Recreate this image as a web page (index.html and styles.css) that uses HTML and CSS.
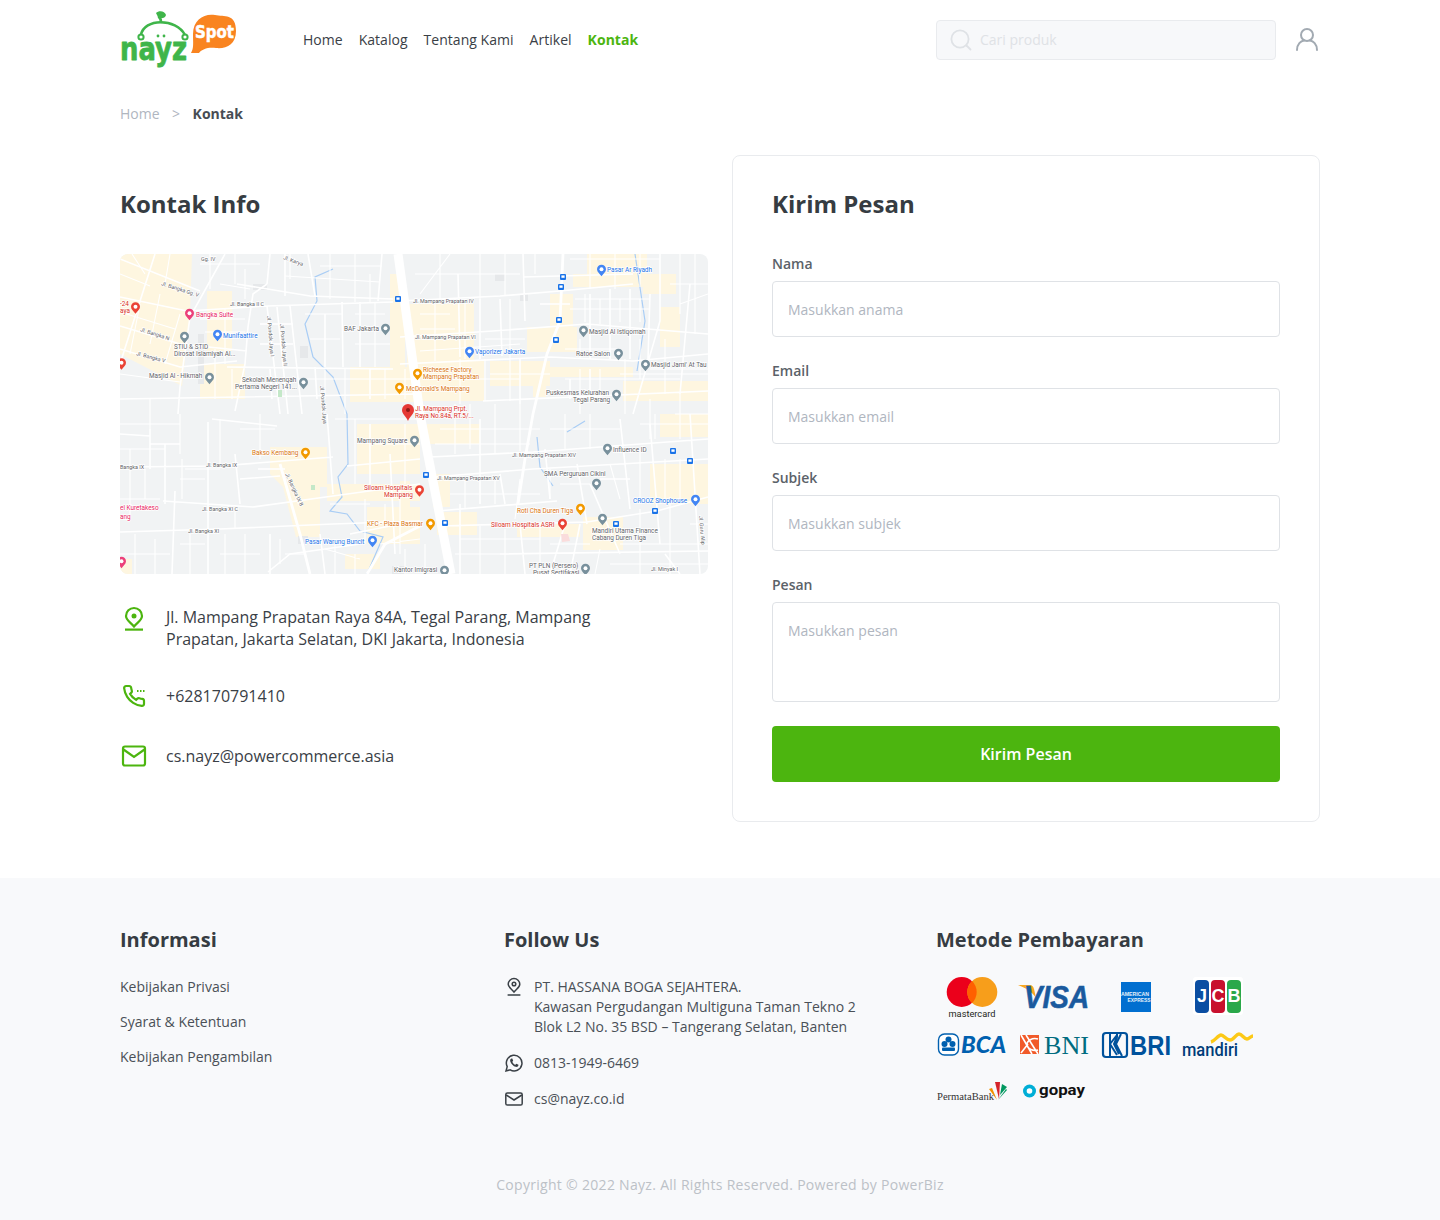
FILE: index.html
```html
<!DOCTYPE html>
<html lang="id">
<head>
<meta charset="utf-8">
<title>Kontak - Nayz</title>
<link rel="stylesheet" href="styles.css">
</head>
<body>
<header class="header wrap">
  <a class="logo" href="#" aria-label="Nayz Spot">
    <svg width="120" height="60" viewBox="0 0 120 60">
      <path class="logo-line" d="M21 25 C24 8 56 8 65 25"/>
      <circle class="logo-ring" cx="21" cy="27" r="2.6"/>
      <circle class="logo-ring" cx="65" cy="27" r="2.6"/>
      <path class="logo-line" d="M41 12 C41 9 40 8 39 7"/>
      <path class="logo-leaf" d="M36 3 C39 0 45 1 46 5 C45 9 40 9 38 7 Z"/>
      <circle class="logo-dot" cx="38" cy="26" r="1.4"/>
      <circle class="logo-dot" cx="44" cy="26" r="1.4"/>
      <text class="logo-nayz" x="0" y="50" textLength="67" lengthAdjust="spacingAndGlyphs">nayz</text>
      <path class="logo-bubble" d="M71 43 C74 38 73 33 73 24 C73 9 85 3 95 5 C104 7 116 3 116 21 C116 35 106 39 96 38 C88 37 82 39 79 43 Z"/>
      <text class="logo-spot" x="75" y="28" textLength="39" lengthAdjust="spacingAndGlyphs">Spot</text>
    </svg>
  </a>
  <nav class="nav">
    <a href="#">Home</a><a href="#">Katalog</a><a href="#">Tentang Kami</a><a href="#">Artikel</a><a class="active" href="#">Kontak</a>
  </nav>
  <div class="header-right">
    <label class="search">
      <svg width="22" height="22" viewBox="0 0 22 22"><circle cx="10" cy="10" r="8.6"/><path d="M16.5 16.5 L20.5 20.5"/></svg>
      <input type="text" placeholder="Cari produk">
    </label>
    <svg class="user" width="24" height="24" viewBox="0 0 24 24"><circle cx="12" cy="8" r="6"/><path d="M2 23 C2 17 6 14 9 13.4 M22 23 C22 17 18 14 15 13.4"/></svg>
  </div>
</header>

<div class="crumbs wrap"><a href="#">Home</a><span class="sep">&gt;</span><strong>Kontak</strong></div>

<main class="main wrap">
  <section class="info">
    <h1 class="title">Kontak Info</h1>
    <svg class="map" viewBox="0 0 588 320" width="588" height="320">
      <defs>
        <symbol id="pin" viewBox="0 0 10 13"><path d="M5 0 A5 5 0 0 1 10 5 C10 8 7 10 5 13 C3 10 0 8 0 5 A5 5 0 0 1 5 0 Z"/><circle cx="5" cy="5" r="2.2" fill="#fff"/></symbol>
        <symbol id="bus" viewBox="0 0 6 6"><rect width="6" height="6" rx="1" fill="#1a73e8"/><rect x="1.4" y="1.4" width="3.2" height="2.4" fill="#fff"/></symbol>
      </defs>
      <rect class="m-bg" width="588" height="320"/>
      <g class="m-yellow">
        <path d="M0 0H72L70 60 62 132 0 100Z"/>
        <rect x="87" y="37" width="25" height="60"/><rect x="80" y="110" width="45" height="35"/>
        <rect x="230" y="113" width="70" height="35"/><rect x="270" y="20" width="15" height="95"/>
        <rect x="287" y="50" width="67" height="57"/><rect x="430" y="40" width="23" height="37"/>
        <rect x="407" y="73" width="50" height="25"/><rect x="370" y="107" width="60" height="25"/>
        <rect x="287" y="107" width="77" height="40"/><rect x="430" y="113" width="83" height="10"/>
        <rect x="453" y="20" width="75" height="13"/><rect x="467" y="0" width="60" height="20"/>
        <rect x="523" y="20" width="33" height="20"/><rect x="540" y="53" width="20" height="40"/>
        <rect x="503" y="127" width="85" height="20"/><rect x="413" y="120" width="13" height="23"/>
        <path d="M150 193H207V233H200V283H176L163 233 150 220Z"/>
        <rect x="207" y="230" width="93" height="17"/><rect x="237" y="170" width="63" height="50"/>
        <rect x="247" y="253" width="53" height="37"/><rect x="280" y="227" width="10" height="33"/>
        <rect x="313" y="220" width="17" height="33"/><rect x="317" y="258" width="40" height="23"/>
        <rect x="397" y="270" width="63" height="13"/><rect x="463" y="263" width="40" height="33"/>
        <rect x="530" y="210" width="58" height="40"/><rect x="540" y="160" width="48" height="23"/>
        <rect x="307" y="170" width="53" height="20"/><rect x="0" y="305" width="12" height="15"/>
        <rect x="225" y="300" width="35" height="15"/>
      </g>
      <g class="m-gray-block"><rect x="180" y="92" width="8" height="12"/><rect x="78" y="80" width="6" height="50"/><rect x="133" y="30" width="14" height="6"/><rect x="178" y="282" width="10" height="8"/><rect x="400" y="40" width="8" height="7"/><rect x="375" y="20" width="10" height="7"/><rect x="272" y="312" width="14" height="8"/></g>
      <path class="m-river" d="M213 15L195 23 197 47 185 70 193 103 213 123 227 160 228 210 218 223 222 243 210 257 227 260 240 277 263 283 247 320M515 0L525 67 517 117M417 183L420 213 433 232M447 178L465 167"/>
      <path class="m-road-thin" d="M12 0L25 20M50 0L45 30M0 20L30 32M0 58L55 75M20 50L10 100M40 40L30 90M60 60L45 110M0 120L60 128M80 10H140M90 0V35M115 0V30M125 15V45M100 30L130 35M80 65H125M85 78H125M105 55V110M95 95V145M112 115V145M170 0V25M200 12H262M210 0V45M235 0V48M250 20V48M165 22L260 28M185 60H222M235 60H265M235 75H270M235 90H270M255 48V113M190 85H220M140 125H300M205 115V145M225 115V160M265 115V145M285 115V145M30 145V175M0 170H60M60 160V200M0 195H45M10 195V260M25 215V245M65 215H100M100 165V210M120 175H155M140 160V205M0 300H50M0 245H40M15 280V320M35 285V320M60 290H85M70 280V320M105 280V320M125 280V320M100 300H140M165 300H185M160 285V310M60 225H85M62 205V245M115 255V275M215 165H300M235 165V230M255 190H300M285 170V230M210 250H250M245 245V290M265 250V270M280 235V300M205 295L240 305M215 285V320M235 300V320M260 290L300 285M285 295V320M305 290V320"/>
      <path class="m-road-thin" d="M300 60H330M300 75H335M300 97L400 90M315 50V107M345 45V105M365 85H405M390 45V105M370 120H430M310 125H400M340 105V150M365 105V147M390 105V147M300 40L330 0M295 20H400M320 0V45M360 0V45M385 0V42M415 0V20M450 5H540M470 0V35M495 0V35M520 0V33M455 45H530M450 55H530M560 0V60M550 30H588M575 0V80M560 50L588 40M465 40V68M480 45V70M500 45V68M520 45V68M445 95H500M460 85V105M520 85V125M545 85V140M500 120H588M530 115H588M445 125H560M460 115V160M480 115V145M505 105V160M530 145V185M560 140V185M555 160H588M320 175H420M335 150V200M350 150V195M375 150V200M400 150V197M315 190H410M430 175H500M445 160V195M470 160V195M520 170H588M535 160V185M520 195V250M545 205V250M560 205V245M440 230H470M430 215V245M490 210L500 245M330 240H420M345 225V255M375 225V250M400 225L395 265M340 285H420M360 272V320M385 275V320M420 270V320M335 300H380M430 290H470M500 290H588M520 255V320M550 250V320M570 270H588M490 310H588M480 295L475 320M510 275H540"/>
      <path class="m-road" d="M0 43L67 57 147 52 273 48M0 5L80 37M35 0L0 110M105 0L70 63 60 133 58 160M0 72L60 90 127 97M0 95L60 113 117 107M147 30L133 40 128 73 125 110 115 157M147 52L160 160M170 52L182 160M157 53L168 160M107 113L273 115M222 48L223 113M117 30L190 42 273 45M150 0L147 30M165 0L165 42M188 0L195 42M262 0L258 47M0 145L300 140M140 70H173M140 90H173M150 115L152 145M205 60V113M240 48V113M250 115V145M195 113L197 145"/>
      <path class="m-road" d="M280 47L380 42 440 37 513 30M280 83L373 77 467 70 588 80M280 110L430 103 513 107 588 100M403 0L405 67M403 23L513 20M363 147L588 137M338 20L340 103M360 45V105M380 45L382 102M420 50H450M470 40V105M490 35V105M510 35V105M530 40L528 105M540 0L540 67 513 160M570 30L560 140M450 125V145M470 115V145M400 105V150"/>
      <path class="m-road" d="M0 213L100 212 213 203M92 165L157 172M207 160L213 240M88 168V320M55 237L52 320M43 247L133 253 213 242 300 230M0 278L100 275 213 270 300 267M30 190H60M45 190V250M115 200L120 250M138 215H165M120 225L160 222M150 280V320M200 280L205 320M0 180L30 182M30 175V215M250 170V230M270 200L275 300M227 212L300 205M148 318L170 300 240 290M230 280L280 270"/>
      <path class="m-road" d="M310 203L413 198 588 185M313 223L413 215 588 205M317 257L437 247M320 272L467 268 537 257 588 243M457 210L467 270M380 300L588 297M360 165V250M380 220L385 250M470 230L500 300M500 165L510 255M530 170L540 290M570 160L580 320M445 270L430 320M460 270L450 320M400 270L405 320M545 300L560 320M425 195L430 245M340 250V320M480 225H510"/>
      <g class="m-main"><path d="M278 0L300 160 331 320"/><path class="m-main-thin" d="M443 0L440 67 427 100 413 160 405 205 398 250M160 210L180 280 190 320M247 320L265 290 300 272"/></g>
      <rect class="m-green" x="158" y="136" width="4" height="7"/><rect class="m-green" x="191" y="231" width="4" height="5"/><rect class="m-green" x="237" y="184" width="6" height="5"/>
      <path class="m-lightred" d="M441 280H448L450 287 442 288Z"/>

      <g class="m-pin-pink"><use href="#pin" x="65" y="54" width="9" height="13"/><use href="#pin" x="-3" y="302" width="9" height="13"/></g>
      <g class="m-pin-red"><use href="#pin" x="11" y="48" width="9" height="12"/><use href="#pin" x="-3" y="104" width="9" height="12"/><use href="#pin" x="295" y="231" width="9" height="12"/><use href="#pin" x="438" y="264" width="9" height="13"/></g>
      <g class="m-pin-blue"><use href="#pin" x="93" y="75" width="9" height="13"/><use href="#pin" x="477" y="10" width="9" height="13"/><use href="#pin" x="345" y="92" width="9" height="13"/><use href="#pin" x="248" y="281" width="9" height="13"/><use href="#pin" x="571" y="240" width="9" height="13"/></g>
      <g class="m-pin-gray"><use href="#pin" x="60" y="77" width="9" height="13"/><use href="#pin" x="85" y="118" width="9" height="13"/><use href="#pin" x="179" y="123" width="9" height="13"/><use href="#pin" x="261" y="69" width="9" height="13"/><use href="#pin" x="459" y="71" width="9" height="13"/><use href="#pin" x="494" y="94" width="9" height="13"/><use href="#pin" x="521" y="105" width="9" height="13"/><use href="#pin" x="492" y="135" width="9" height="13"/><use href="#pin" x="290" y="181" width="9" height="13"/><use href="#pin" x="483" y="189" width="9" height="13"/><use href="#pin" x="472" y="224" width="9" height="13"/><use href="#pin" x="478" y="259" width="9" height="13"/><use href="#pin" x="461" y="309" width="9" height="13"/><use href="#pin" x="320" y="311" width="9" height="13"/></g>
      <g class="m-pin-orange"><use href="#pin" x="275" y="128" width="9" height="13"/><use href="#pin" x="293" y="114" width="9" height="13"/><use href="#pin" x="181" y="193" width="9" height="13"/><use href="#pin" x="306" y="264" width="9" height="13"/><use href="#pin" x="456" y="249" width="9" height="13"/></g>
      <path class="m-marker" d="M288 150 A6 6 0 0 1 294 156 C294 160 290 162 288 167 C286 162 282 160 282 156 A6 6 0 0 1 288 150 Z"/><circle class="m-marker-dot" cx="288" cy="156" r="2"/>

      <use href="#bus" x="275" y="42" width="6" height="6"/><use href="#bus" x="440" y="20" width="6" height="6"/><use href="#bus" x="438" y="30" width="6" height="6"/><use href="#bus" x="436" y="63" width="6" height="6"/><use href="#bus" x="433" y="83" width="6" height="6"/><use href="#bus" x="303" y="218" width="6" height="6"/><use href="#bus" x="322" y="266" width="6" height="6"/><use href="#bus" x="493" y="267" width="6" height="6"/><use href="#bus" x="532" y="254" width="6" height="6"/><use href="#bus" x="550" y="194" width="6" height="6"/><use href="#bus" x="567" y="204" width="6" height="6"/>

      <g class="m-t-pink"><text x="76" y="63">Bangka Suite</text><text x="0" y="256">el Kuretakeso</text><text x="0" y="265">ang</text></g>
      <g class="m-t-blue"><text x="103" y="84">Munifaattire</text><text x="487" y="18">Pasar Ar Riyadh</text><text x="355" y="100">Vaporizer Jakarta</text><text x="185" y="290">Pasar Warung Buncit</text><text x="513" y="249">CROOZ Shophouse</text></g>
      <g class="m-t-gray">
        <text x="54" y="95">STIU &amp; STID</text><text x="54" y="102">Dirosat Islamiyah Al...</text>
        <text x="29" y="124">Masjid Al - Hikmah</text><text x="122" y="128">Sekolah Menengah</text><text x="115" y="135">Pertama Negeri 141...</text>
        <text x="224" y="77">BAF Jakarta</text><text x="469" y="80">Masjid Al Istiqomah</text><text x="456" y="102">Ratoe Salon</text><text x="531" y="113">Masjid Jami' At Tau</text>
        <text x="426" y="141">Puskesmas Kelurahan</text><text x="453" y="148">Tegal Parang</text><text x="237" y="189">Mampang Square</text>
        <text x="493" y="198">Influence ID</text><text x="424" y="222">SMA Perguruan Cikini</text><text x="472" y="279">Mandiri Utama Finance</text><text x="472" y="286">Cabang Duren Tiga</text>
        <text x="409" y="314">PT PLN (Persero)</text><text x="413" y="321">Pusat Sertifikasi</text><text x="274" y="318">Kantor Imigrasi</text>
      </g>
      <g class="m-t-orange"><text x="303" y="118">Richeese Factory</text><text x="303" y="125">Mampang Prapatan</text><text x="286" y="137">McDonald's Mampang</text><text x="132" y="201">Bakso Kembang</text><text x="247" y="272">KFC - Plaza Basmar</text><text x="397" y="259">Roti Cha Duren Tiga</text></g>
      <g class="m-t-red"><text x="295" y="157">Jl. Mampang Prpt.</text><text x="295" y="164">Raya No.84a, RT.5/...</text><text x="244" y="236">Siloam Hospitals</text><text x="264" y="243">Mampang</text><text x="371" y="273">Siloam Hospitals ASRI</text><text x="0" y="52">-24</text><text x="0" y="59">aya</text></g>
      <g class="m-t-road">
        <text x="0" y="0" transform="translate(41 31) rotate(18)">Jl. Bangka Gg. V</text>
        <text x="110" y="52">Jl. Bangka II C</text>
        <text x="0" y="0" transform="translate(20 77) rotate(18)">Jl. Bangka N</text>
        <text x="0" y="0" transform="translate(16 101) rotate(15)">Jl. Bangka V</text>
        <text x="0" y="0" transform="translate(147 62) rotate(85)">Jl. Pondok Jaya I</text>
        <text x="0" y="0" transform="translate(160 70) rotate(85)">Jl. Pondok Jaya II</text>
        <text x="293" y="49">Jl. Mampang Prapatan IV</text>
        <text x="295" y="85">Jl. Mampang Prapatan VI</text>
        <text x="0" y="215">Bangka IX</text><text x="86" y="213">Jl. Bangka IX</text>
        <text x="82" y="257">Jl. Bangka XI C</text><text x="68" y="279">Jl. Bangka XI</text>
        <text x="0" y="0" transform="translate(165 220) rotate(65)">Jl. Bangka IX B</text>
        <text x="317" y="226">Jl. Mampang Prapatan XV</text>
        <text x="392" y="203">Jl. Mampang Prapatan XIV</text>
        <text x="531" y="317">Jl. Minyak I</text>
        <text x="0" y="0" transform="translate(579 262) rotate(85)">Jl. Guru Alip</text>
        <text x="0" y="0" transform="translate(200 132) rotate(85)">Jl. Pondok Jaya</text>
        <text x="0" y="0" transform="translate(163 5) rotate(20)">Jl. Karya</text>
        <text x="81" y="7">Gg. IV</text>
      </g>
    </svg>

    <ul class="contacts">
      <li class="contact">
        <svg class="c-icon" width="24" height="24" viewBox="0 0 24 24"><path d="M12 2 A8 8 0 0 1 20 10 C20 14.500 15 16.500 12 20.500 C9 16.500 4 14.500 4 10 A8 8 0 0 1 12 2 Z"/><circle class="c-dot" cx="12" cy="10" r="2.500"/><path d="M3 23.600 H21"/></svg>
        <span>Jl. Mampang Prapatan Raya 84A, Tegal Parang, Mampang<br>Prapatan, Jakarta Selatan, DKI Jakarta, Indonesia</span>
      </li>
      <li class="contact contact-tall">
        <svg class="c-icon" width="24" height="24" viewBox="0 0 24 24"><path d="M22 16.92v3a2 2 0 0 1-2.18 2 19.79 19.79 0 0 1-8.63-3.07 19.5 19.5 0 0 1-6-6 19.79 19.79 0 0 1-3.07-8.67A2 2 0 0 1 4.11 2h3a2 2 0 0 1 2 1.72 12.84 12.84 0 0 0 .7 2.81 2 2 0 0 1-.45 2.11L8.09 9.91a16 16 0 0 0 6 6l1.27-1.27a2 2 0 0 1 2.11-.45 12.84 12.84 0 0 0 2.81.7A2 2 0 0 1 22 16.92z"/><path class="c-dots" d="M15 7 H23"/></svg>
        <span>+628170791410</span>
      </li>
      <li class="contact">
        <svg class="c-icon" width="24" height="24" viewBox="0 0 24 24"><rect x="1" y="2.500" width="22" height="19" rx="2"/><path d="M1.500 5.500 L12 13 L22.500 5.500"/></svg>
        <span>cs.nayz@powercommerce.asia</span>
      </li>
    </ul>
  </section>

  <section class="card">
    <h2 class="title">Kirim Pesan</h2>
    <form class="form">
      <label class="field"><span>Nama</span><input type="text" placeholder="Masukkan anama"></label>
      <label class="field"><span>Email</span><input type="text" placeholder="Masukkan email"></label>
      <label class="field"><span>Subjek</span><input type="text" placeholder="Masukkan subjek"></label>
      <label class="field"><span>Pesan</span><textarea placeholder="Masukkan pesan"></textarea></label>
      <button class="send" type="button">Kirim Pesan</button>
    </form>
  </section>
</main>

<footer class="footer">
  <div class="wrap foot-cols">
    <div class="foot-a">
      <h3>Informasi</h3>
      <ul class="links">
        <li><a href="#">Kebijakan Privasi</a></li>
        <li><a href="#">Syarat &amp; Ketentuan</a></li>
        <li><a href="#">Kebijakan Pengambilan</a></li>
      </ul>
    </div>
    <div class="foot-b">
      <h3>Follow Us</h3>
      <ul class="follow">
        <li><svg class="f-icon" width="20" height="20" viewBox="0 0 20 20"><path d="M10 1.5 A5.8 5.8 0 0 1 15.8 7.2 C15.8 10.4 12.2 12.2 10 15 C7.8 12.2 4.2 10.4 4.2 7.2 A5.8 5.8 0 0 1 10 1.5 Z"/><circle cx="10" cy="7" r="1.8"/><path d="M3.6 18 H16.4"/></svg><span>PT. HASSANA BOGA SEJAHTERA.<br>Kawasan Pergudangan Multiguna Taman Tekno 2<br>Blok L2 No. 35 BSD – Tangerang Selatan, Banten</span></li>
        <li><svg class="f-icon" width="20" height="20" viewBox="0 0 20 20"><path d="M2 18 L3.2 13.6 A7.8 7.8 0 1 1 6.2 16.8 Z"/><path class="f-fill" d="M7.4 5.6 C6.4 6 5.9 7 6.3 8.4 C7 10.8 9.4 13.2 11.7 13.8 C13.1 14.2 14.2 13.6 14.4 12.6 L14.4 11.8 L12.4 10.8 L11.4 11.8 C10.2 11.4 8.8 10 8.3 8.7 L9.2 7.7 L8.3 5.6 Z"/></svg><span>0813-1949-6469</span></li>
        <li><svg class="f-icon" width="20" height="20" viewBox="0 0 20 20"><rect x="1.8" y="4" width="16.4" height="12" rx="1.6"/><path d="M2.2 6 L10 11 L17.8 6"/></svg><span>cs@nayz.co.id</span></li>
      </ul>
    </div>
    <div class="foot-c">
      <h3>Metode Pembayaran</h3>
      <div class="pays">
        <svg width="72" height="48" viewBox="0 0 72 48"><circle cx="25.700" cy="20" r="15" fill="#eb001b"/><circle cx="46.300" cy="20" r="15" fill="#f79e1b"/><path d="M36 9.100 A15 15 0 0 1 36 30.900 A15 15 0 0 1 36 9.100Z" fill="#ff5f00"/><text class="p-mc" x="36" y="44.700" textLength="47" text-anchor="middle" lengthAdjust="spacingAndGlyphs">mastercard</text></svg>
        <svg width="72" height="48" viewBox="0 0 72 48"><path d="M0 13 H12 C14 13 15 14 16 17 L18 26 C14 20 8 16 0 13Z" fill="#f7a823"/><text class="p-visa" x="6" y="36" textLength="65" lengthAdjust="spacingAndGlyphs">VISA</text></svg>
        <svg width="72" height="48" viewBox="0 0 72 48"><rect x="21" y="10" width="30" height="30" fill="#016fd0"/><text class="p-amex" x="35" y="24" text-anchor="middle" textLength="28" lengthAdjust="spacingAndGlyphs">AMERICAN</text><text class="p-amex" x="39" y="29.500" text-anchor="middle" textLength="23" lengthAdjust="spacingAndGlyphs">EXPRESS</text></svg>
        <svg width="72" height="48" viewBox="0 0 72 48"><rect x="11" y="5" width="50" height="38" rx="3" fill="#fff"/><rect x="13" y="8" width="14" height="33" rx="4" fill="#0b4ea2"/><rect x="29" y="8" width="14" height="33" rx="4" fill="#c8102e"/><rect x="45" y="8" width="14" height="33" rx="4" fill="#2aa84a"/><text class="p-jcb" x="15" y="30">J</text><text class="p-jcb" x="29.500" y="30">C</text><text class="p-jcb" x="45.500" y="30">B</text></svg>
        <svg width="72" height="48" viewBox="0 0 72 48"><rect x="2.500" y="14" width="20" height="21" rx="6" fill="#fff" stroke="#0060af" stroke-width="1.400"/><circle cx="12.500" cy="19.500" r="3" fill="#0060af"/><circle cx="8.500" cy="24" r="3" fill="#0060af"/><circle cx="16.500" cy="24" r="3" fill="#0060af"/><rect x="6" y="27.500" width="13" height="3.500" rx="1" fill="#0060af"/><text class="p-bca" x="25" y="32.500" textLength="45" lengthAdjust="spacingAndGlyphs">BCA</text></svg>
        <svg width="72" height="48" viewBox="0 0 72 48"><rect x="2" y="15" width="19" height="19" fill="#f15a29"/><path d="M3 15 L14 34 M8 15 L20 34 M20 19 A8 6 0 0 0 9 25 A8 6 0 0 0 20 30 M3 33 L10 24" stroke="#fff" stroke-width="1.600" fill="none"/><text class="p-bni" x="26" y="33.500" textLength="45" lengthAdjust="spacingAndGlyphs">BNI</text></svg>
        <svg width="72" height="48" viewBox="0 0 72 48"><rect x="3" y="13" width="24" height="24" rx="3" fill="none" stroke="#00529c" stroke-width="2.200"/><path d="M10 13 V37 M10 24 L17 15 M10 24 L17 35 M17 13 V17 L14 24 L19 34 M21 14 L16 24 L22 36" stroke="#00529c" stroke-width="2" fill="none"/><text class="p-bri" x="30" y="35" textLength="41" lengthAdjust="spacingAndGlyphs">BRI</text></svg>
        <svg width="72" height="48" viewBox="0 0 72 48"><path class="p-wave" d="M29 22 C33 21 36 15 39 15 C42 15 44 20 48 20 C52 20 54 14 57 14 C60 14 62 19 65 19 C67 19 69 16 71 16"/><text class="p-mandiri" x="0" y="35.500" textLength="56" lengthAdjust="spacingAndGlyphs">mandiri</text></svg>
        <svg width="72" height="48" viewBox="0 0 72 48"><path d="M59 14 L64 14 L63 31 Z" fill="#d5232a"/><path d="M64 27 L66 16 L71 19 Z" fill="#00985f"/><path d="M62 32 L70 21 L71 22 Z" fill="#00985f"/><path d="M56 20 L61 32 L53 21 Z" fill="#f29100"/><text class="p-perm" x="1" y="32" textLength="57" lengthAdjust="spacingAndGlyphs">PermataBank</text></svg>
        <svg width="72" height="48" viewBox="0 0 72 48"><circle cx="11.500" cy="23" r="6.500" fill="#00aed6"/><circle cx="11.500" cy="23" r="2.800" fill="#fff"/><text class="p-gopay" x="21" y="26.500" textLength="46" lengthAdjust="spacingAndGlyphs">gopay</text></svg>
      </div>
    </div>
  </div>
  <p class="copy">Copyright © 2022 Nayz. All Rights Reserved. Powered by PowerBiz</p>
</footer>
</body>
</html>
```

FILE: styles.css
```css
* { box-sizing: border-box; }
html, body { margin: 0; padding: 0; }
body { font-family: "Open Sans", "Liberation Sans", sans-serif; color: #2f353b; background: #fff; font-size: 14px; }
a { color: inherit; text-decoration: none; }
ul { list-style: none; margin: 0; padding: 0; }
.wrap { width: 1200px; margin-left: auto; margin-right: auto; }

.header { display: flex; align-items: center; height: 80px; }
.logo { display: block; width: 183px; height: 60px; }
.logo svg { display: block; overflow: visible; }
.logo-line { fill: none; stroke: #3fb54a; stroke-width: 2.6; stroke-linecap: round; }
.logo-ring { fill: #fff; stroke: #3fb54a; stroke-width: 2; }
.logo-leaf, .logo-dot { fill: #3fb54a; }
.logo-nayz { font-family: "DejaVu Sans", sans-serif; font-weight: 700; font-size: 32px; fill: #3fb54a; stroke: #3fb54a; stroke-width: .8; stroke-linejoin: round; }
.logo-bubble { fill: #f98420; }
.logo-spot { font-family: "DejaVu Sans", sans-serif; font-weight: 700; font-size: 17px; fill: #fff; stroke: #fff; stroke-width: .5; }
.nav { display: flex; gap: 16px; font-size: 14px; line-height: 20px; color: #3a4046; letter-spacing: .03px; }
.nav .active { color: #4cb50f; font-weight: 700; }
.header-right { margin-left: auto; display: flex; align-items: center; gap: 19px; margin-right: 1px; }
.search { display: flex; align-items: center; gap: 8px; width: 340px; height: 40px; padding-left: 13px; background: #f7f8fa; border: 1px solid #e9ebee; border-radius: 4px; }
.search svg { fill: none; stroke: #dfe2e6; stroke-width: 1.8; stroke-linecap: round; flex: none; }
.search input { border: 0; outline: 0; background: none; font: 14px/20px "Open Sans", sans-serif; width: 280px; height: 20px; padding: 0; }
.search input::placeholder { color: #dfe2e6; opacity: 1; }
.user { fill: none; stroke: #a2aab2; stroke-width: 2; stroke-linecap: round; margin-top: -2px; }

.crumbs { display: flex; align-items: center; height: 20px; line-height: 20px; margin-top: 24px; font-size: 14px; color: #b0b6bf; }
.crumbs .sep { margin: 0 12.5px; }
.crumbs strong { color: #474d54; font-weight: 700; }

.main { display: grid; grid-template-columns: 588px 588px; gap: 24px; margin-top: 31px; align-items: start; }
.title { margin: 0; font-size: 24px; line-height: 32px; font-weight: 700; color: #363c42; }
.info { padding-top: 33px; }
.map { display: block; margin-top: 34px; border-radius: 8px; }
.m-bg { fill: #f1f3f4; }
.m-yellow { fill: #fef6e0; }
.m-river { fill: none; stroke: #a9cdf5; stroke-width: 1.2; }
.m-road { fill: none; stroke: #fff; stroke-width: 1.6; }
.m-road-thin { fill: none; stroke: #fff; stroke-width: 1.1; }
.m-main { fill: none; stroke: #fff; stroke-width: 9; }
.m-main-thin { stroke-width: 2.8; }
.m-gray-block { fill: #e6e8ea; }
.m-green { fill: #c4e8c8; }
.m-lightred { fill: #fadcdc; }
.m-pin-pink { fill: #ec407a; }
.m-pin-red { fill: #ea4335; }
.m-pin-blue { fill: #4285f4; }
.m-pin-gray { fill: #78909c; }
.m-pin-orange { fill: #f29900; }
.m-marker { fill: #e53935; }
.m-marker-dot { fill: #8e1b16; }
.map text { font-family: "Roboto", sans-serif; font-size: 6.4px; paint-order: stroke; stroke: #fff; stroke-width: 1.4px; }
.m-t-pink text { fill: #e91e63; }
.m-t-blue text { fill: #1a73e8; }
.m-t-gray text { fill: #5f6368; }
.m-t-orange text { fill: #d9730d; }
.m-t-red text { fill: #d93025; }
.m-t-road text { fill: #5f6368; font-size: 5.4px; }

.contacts { margin-top: 32px; display: flex; flex-direction: column; gap: 34px; }
.contact { display: flex; align-items: flex-start; gap: 20px; padding-left: 2px; font-size: 16px; line-height: 22px; color: #3a4046; }
.contact span { display: block; }
.contact-tall { height: 26px; line-height: 24px; }
.contact:last-child { line-height: 24px; }
.c-icon { flex: none; fill: none; stroke: #4cb50f; stroke-width: 2.2; overflow: visible; }
.c-dot { fill: #4cb50f; stroke: none; }
.c-dots { stroke-dasharray: 1.5 1.5; }

.card { border: 1px solid #e9ebee; border-radius: 8px; padding: 32px 39px 39px; height: 667px; }
.form { display: flex; flex-direction: column; gap: 24px; margin-top: 34px; }
.field { display: block; }
.field span { display: block; font-size: 14px; line-height: 20px; font-weight: 600; color: #5b6269; margin-bottom: 7px; }
.field input, .field textarea { display: block; width: 100%; height: 56px; border: 1px solid #dfe2e6; border-radius: 4px; padding: 0 15px; font: 14px/20px "Open Sans", sans-serif; background: #fff; outline: 0; color: #2f353b; resize: none; }
.field textarea { height: 100px; padding-top: 18px; }
.field ::placeholder { color: #b0b6bf; opacity: 1; }
.send { height: 56px; border: 0; border-radius: 4px; background: #4cb50f; color: #fff; font: 600 16px "Open Sans", sans-serif; }

.footer { margin-top: 56px; background: #f8f9fb; height: 342px; padding-top: 48px; }
.foot-cols { display: grid; grid-template-columns: 384px 432px 384px; height: 190px; }
.footer h3 { margin: 0; font-size: 20px; line-height: 28px; font-weight: 700; color: #363c42; }
.links { margin-top: 23px; display: flex; flex-direction: column; gap: 15px; color: #4a5057; line-height: 20px; }
.follow { margin-top: 23px; display: flex; flex-direction: column; gap: 16px; color: #4a5057; line-height: 20px; }
.follow li { display: flex; gap: 10px; align-items: flex-start; }
.f-icon { flex: none; fill: none; stroke: #3a4046; stroke-width: 1.5; }
.f-fill { fill: #3a4046; stroke: none; }
.pays { margin-top: 18px; display: grid; grid-template-columns: repeat(4, 72px); column-gap: 10px; grid-auto-rows: 48px; }
.pays svg { display: block; overflow: visible; }
.p-mc { font: 400 9px "Roboto", sans-serif; fill: #231f20; }
.p-visa { font: italic 700 32px "Liberation Sans", sans-serif; fill: #1a5a9e; stroke: #1a5a9e; stroke-width: .6; }
.p-amex { font: 700 5px "Liberation Sans", sans-serif; fill: #e4effa; }
.p-jcb { font: 700 18px "Liberation Sans", sans-serif; fill: #fff; }
.p-bca { font: italic 900 22px "Lato", sans-serif; fill: #0060af; }
.p-bni { font: 400 26px "Liberation Serif", serif; fill: #006c80; }
.p-bri { font: 700 28px "Liberation Sans", sans-serif; fill: #00529c; }
.p-mandiri { font: 500 18px "Roboto", sans-serif; fill: #003d79; }
.p-wave { fill: none; stroke: #fcc917; stroke-width: 3.4; }
.p-perm { font: 400 10.500px "Liberation Serif", serif; fill: #333; }
.p-gopay { font: 700 15px "Roboto", sans-serif; fill: #111; }
.copy { margin: 59px 0 0; text-align: center; color: #bcc1c7; line-height: 20px; letter-spacing: .3px; font-size: 14px; }
```
